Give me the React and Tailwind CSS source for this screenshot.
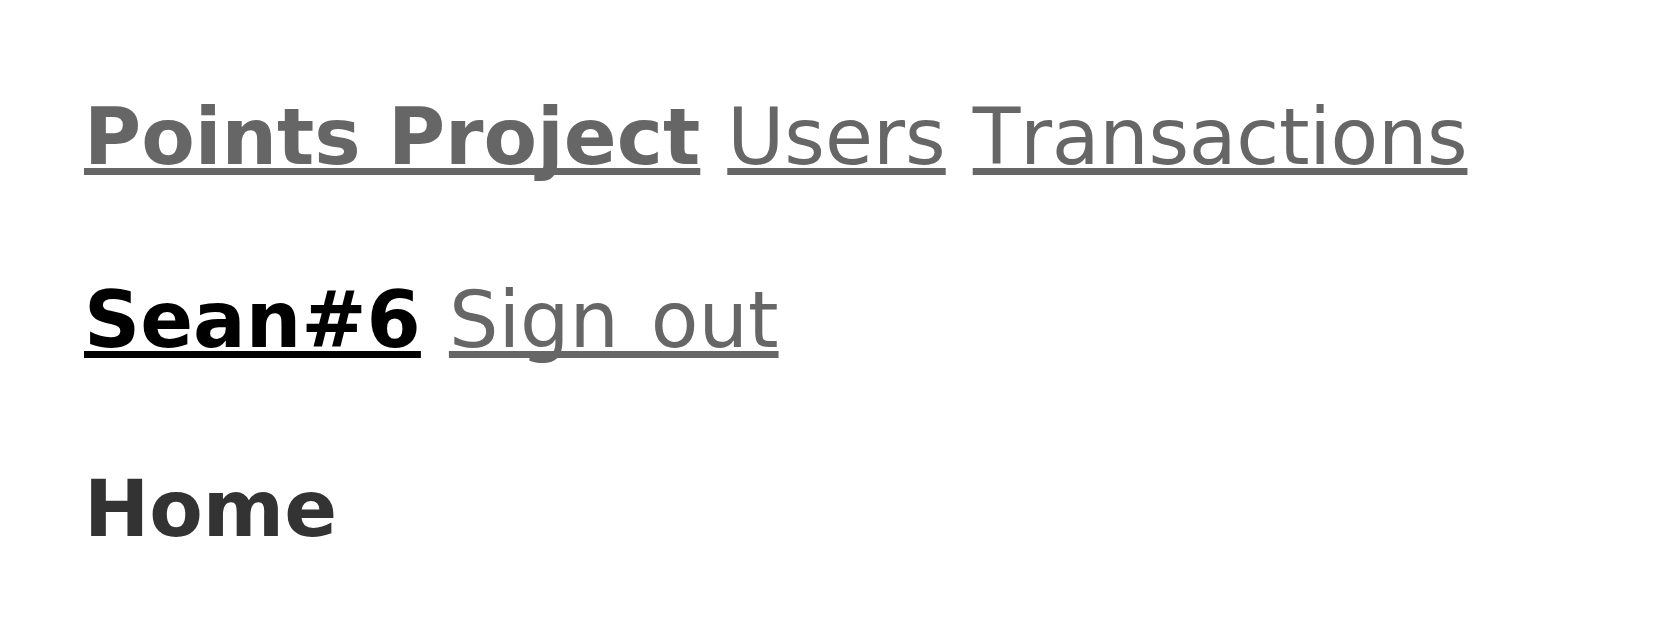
export default function App() {
  return (
    <div className="min-h-screen bg-white pl-[84px] pt-[92px] font-['DejaVu_Sans',sans-serif] text-[78px] leading-[91px] [font-kerning:none]">
      <nav className="flex gap-[27px] whitespace-nowrap">
        <a href="#" className="font-bold text-[#666666] underline [text-decoration-skip-ink:none]">Points Project</a>
        <a href="#" className="text-[#666666] underline [text-decoration-skip-ink:none]">Users</a>
        <a href="#" className="text-[#666666] underline [text-decoration-skip-ink:none] tracking-[-0.3px]">Transactions</a>
      </nav>
      <div className="mt-[92px] flex gap-[28px] whitespace-nowrap">
        <a href="#" className="font-bold text-black underline [text-decoration-skip-ink:none]">Sean#6</a>
        <a href="#" className="text-[#666666] underline [text-decoration-skip-ink:none] [word-spacing:7px]">Sign out</a>
      </div>
      <h1 className="mt-[98px] font-bold text-[#333333]">Home</h1>
    </div>
  );
}
